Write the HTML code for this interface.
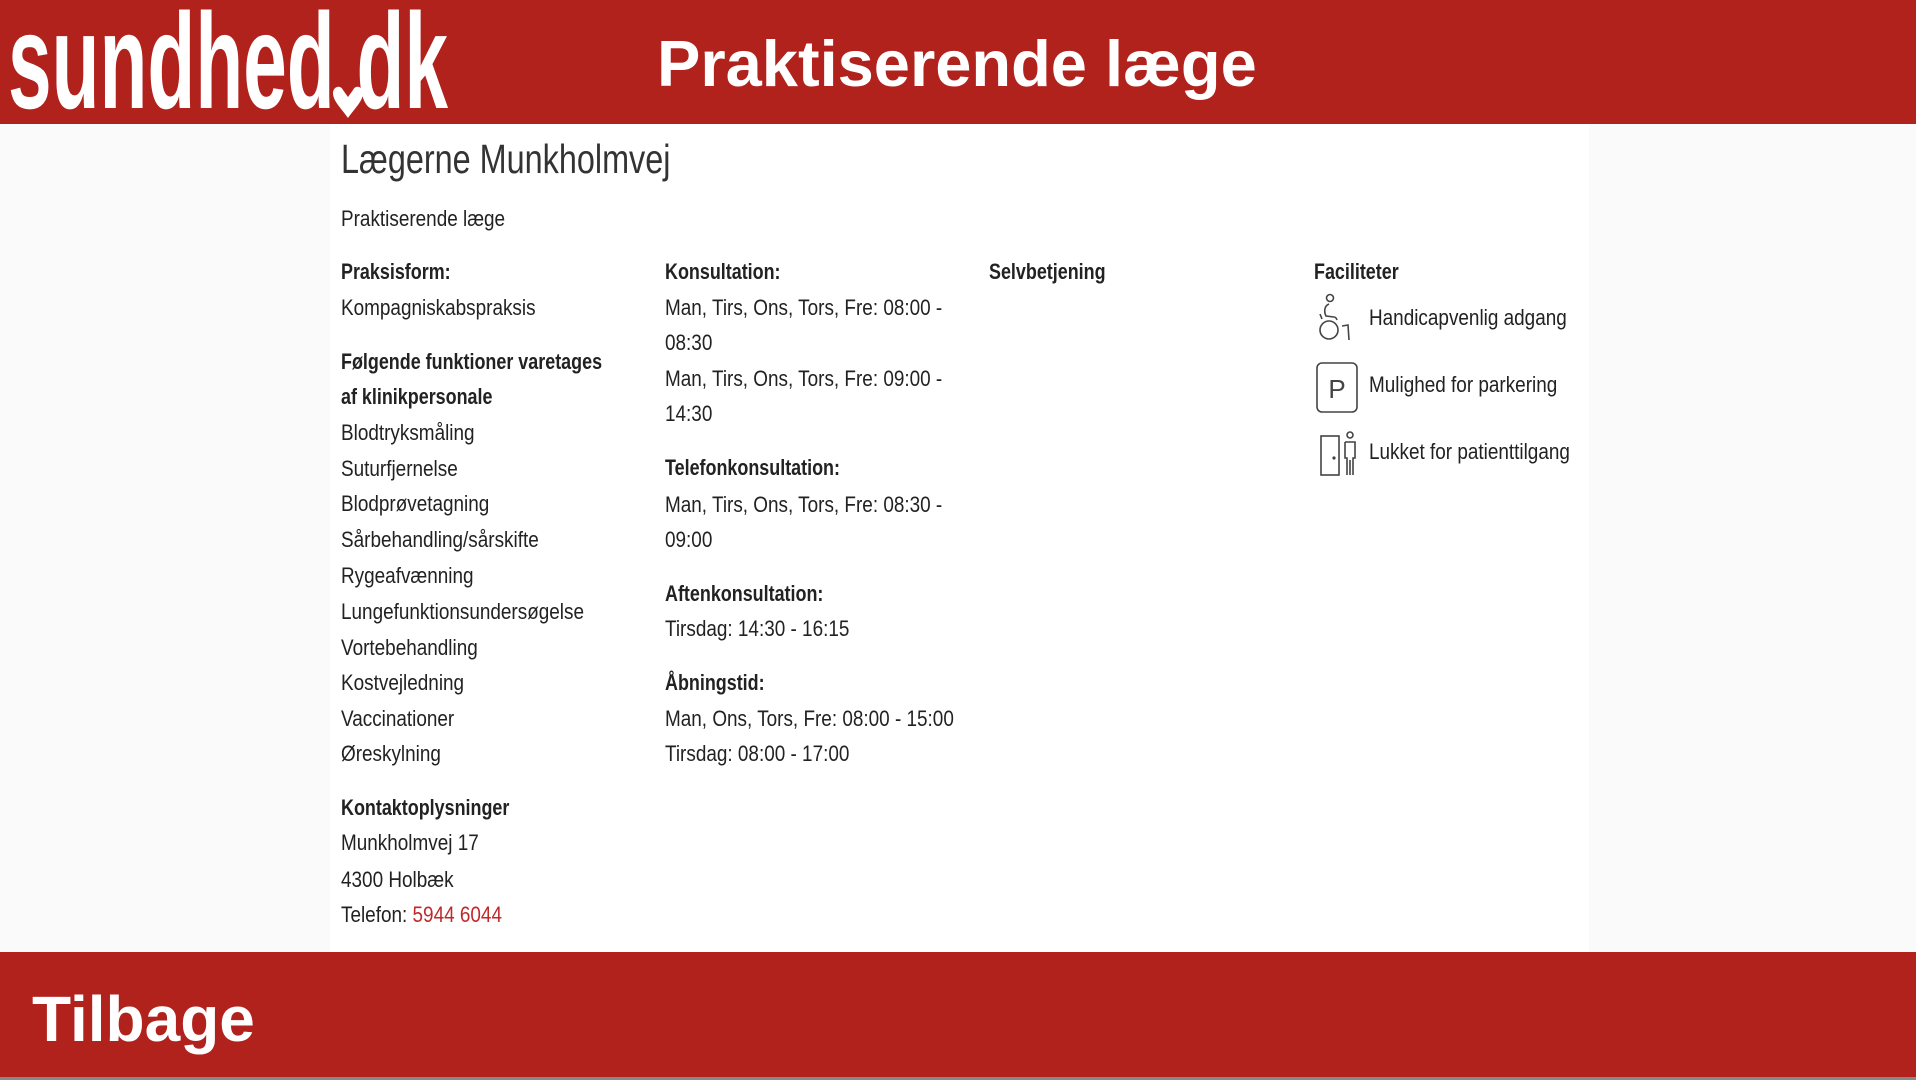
<!DOCTYPE html>
<html><head><meta charset="utf-8"><style>
*{margin:0;padding:0;box-sizing:border-box}
body{width:1916px;height:1080px;overflow:hidden;background:#fafafa;position:relative;font-family:"Liberation Sans",sans-serif;color:#222}
#hdr{position:absolute;left:0;top:0;width:1916px;height:124px;background:#b1221d}
#hdr .t{position:absolute;left:657px;top:26px;font:bold 65px/75px "Liberation Sans",sans-serif;color:#fff;white-space:nowrap}
#panel{position:absolute;left:330px;top:124px;width:1259px;height:828px;background:#fff}
.l{position:absolute;font-size:22px;line-height:36px;white-space:nowrap;transform:scaleX(0.86);transform-origin:0 0}
.b{font-weight:bold;transform:scaleX(0.815)}
#ftr{position:absolute;left:0;top:952px;width:1916px;height:125px;background:#b1221d}
#ftr .t{position:absolute;left:32px;top:30px;font:bold 64px/75px "Liberation Sans",sans-serif;color:#fff}
#line{position:absolute;left:0;top:1077px;width:1916px;height:3px;background:#888}
a{color:#c0282a;text-decoration:none}
</style></head><body>
<div id="hdr">
<svg style="position:absolute;left:0;top:0" width="470" height="124">
<text x="8" y="108" font-family="Liberation Sans, sans-serif" font-weight="600" font-size="136" fill="#fff" textLength="440" lengthAdjust="spacingAndGlyphs">sundhed dk</text>
<path d="M348 118 C341 108 333 101 333 93 C333 87 340 84 343 90 L348 97 L353 90 C356 84 363 87 363 93 C363 101 355 108 348 118Z" fill="#fff"/>
</svg>
<div class="t">Praktiserende læge</div>
</div>
<div id="panel"></div>
<div class="l" style="left:341px;top:134px;font-size:41px;line-height:50px;color:#333;transform:scaleX(0.79)">Lægerne Munkholmvej</div>
<div class="l" style="left:341px;top:201px">Praktiserende læge</div>

<div class="l b" style="left:341px;top:254px">Praksisform:</div>
<div class="l" style="left:341px;top:290px">Kompagniskabspraksis</div>
<div class="l b" style="left:341px;top:344px">Følgende funktioner varetages</div>
<div class="l b" style="left:341px;top:379px">af klinikpersonale</div>
<div class="l" style="left:341px;top:415px">Blodtryksmåling</div>
<div class="l" style="left:341px;top:451px">Suturfjernelse</div>
<div class="l" style="left:341px;top:486px">Blodprøvetagning</div>
<div class="l" style="left:341px;top:522px">Sårbehandling/sårskifte</div>
<div class="l" style="left:341px;top:558px">Rygeafvænning</div>
<div class="l" style="left:341px;top:594px">Lungefunktionsundersøgelse</div>
<div class="l" style="left:341px;top:630px">Vortebehandling</div>
<div class="l" style="left:341px;top:665px">Kostvejledning</div>
<div class="l" style="left:341px;top:701px">Vaccinationer</div>
<div class="l" style="left:341px;top:736px">Øreskylning</div>
<div class="l b" style="left:341px;top:790px">Kontaktoplysninger</div>
<div class="l" style="left:341px;top:825px">Munkholmvej 17</div>
<div class="l" style="left:341px;top:862px">4300 Holbæk</div>
<div class="l" style="left:341px;top:897px">Telefon: <a>5944 6044</a></div>

<div class="l b" style="left:665px;top:254px">Konsultation:</div>
<div class="l" style="left:665px;top:290px">Man, Tirs, Ons, Tors, Fre: 08:00 -</div>
<div class="l" style="left:665px;top:325px">08:30</div>
<div class="l" style="left:665px;top:361px">Man, Tirs, Ons, Tors, Fre: 09:00 -</div>
<div class="l" style="left:665px;top:396px">14:30</div>
<div class="l b" style="left:665px;top:450px">Telefonkonsultation:</div>
<div class="l" style="left:665px;top:487px">Man, Tirs, Ons, Tors, Fre: 08:30 -</div>
<div class="l" style="left:665px;top:522px">09:00</div>
<div class="l b" style="left:665px;top:576px">Aftenkonsultation:</div>
<div class="l" style="left:665px;top:611px">Tirsdag: 14:30 - 16:15</div>
<div class="l b" style="left:665px;top:665px">Åbningstid:</div>
<div class="l" style="left:665px;top:701px">Man, Ons, Tors, Fre: 08:00 - 15:00</div>
<div class="l" style="left:665px;top:736px">Tirsdag: 08:00 - 17:00</div>

<div class="l b" style="left:989px;top:254px">Selvbetjening</div>

<div class="l b" style="left:1314px;top:254px">Faciliteter</div>
<svg style="position:absolute;left:1314px;top:292px" width="40" height="52" fill="none" stroke="#444" stroke-width="1.6">
<circle cx="16" cy="6" r="3.5"/>
<path d="M15 12 C10 14 10 20 12 24 L20 25 C22 25 23 28 23 28"/>
<path d="M6 22 L8 27"/>
<circle cx="15" cy="38" r="9"/>
<path d="M28 34 L34 33 L35 48"/>
</svg>
<svg style="position:absolute;left:1316px;top:362px" width="44" height="52" fill="none" stroke="#444" stroke-width="1.6">
<rect x="1" y="1" width="40" height="49" rx="5"/>
<text x="21" y="36" text-anchor="middle" font-family="Liberation Sans, sans-serif" font-size="26" fill="#444" stroke="none">P</text>
</svg>
<svg style="position:absolute;left:1318px;top:430px" width="42" height="48" fill="none" stroke="#444" stroke-width="1.6">
<rect x="3" y="6" width="18" height="39"/>
<circle cx="16" cy="28" r="0.8" fill="#444"/>
<circle cx="32" cy="5" r="3"/>
<path d="M27 12 L37 12 L37 28 L35 28 L35 45 M27 12 L27 28 L29 28 L29 45 M32 30 L32 45"/>
</svg>
<div class="l" style="left:1369px;top:300px">Handicapvenlig adgang</div>
<div class="l" style="left:1369px;top:367px">Mulighed for parkering</div>
<div class="l" style="left:1369px;top:434px">Lukket for patienttilgang</div>

<div id="ftr"><div class="t">Tilbage</div></div>
<div id="line"></div>
</body></html>
